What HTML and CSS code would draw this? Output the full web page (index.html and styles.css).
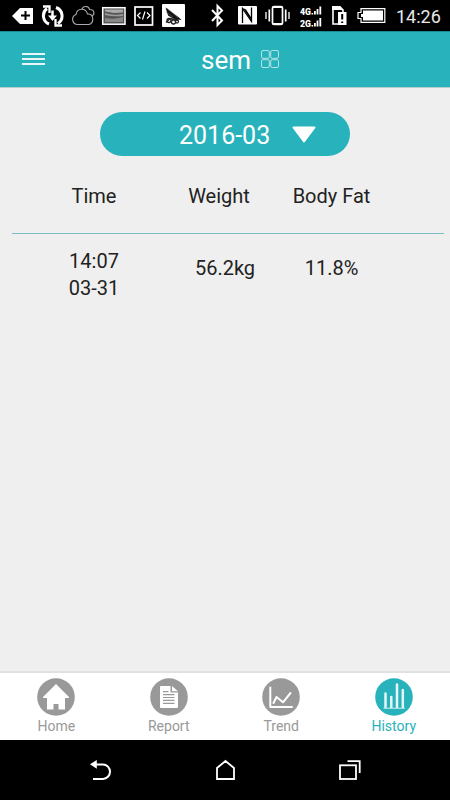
FILE: index.html
```html
<!DOCTYPE html>
<html lang="en">
  <head>
    <meta charset="UTF-8" />
    <meta name="viewport" content="width=device-width, initial-scale=1.0" />
    <title>History</title>
    <link rel="stylesheet" href="styles.css">
  </head>
  <body>
    <div class="status-bar">
      <div class="status-icons">
        <svg width="21" height="31" viewBox="0 0 21 31">
          <path d="M0 16L8 8H21V24H8Z" fill="#fff" />
          <path d="M13.500 11V20M9 15.500H18" stroke="#000" stroke-width="2" />
        </svg>
        <svg width="23" height="31" viewBox="0 0 23 31" fill="none" stroke="#fff" stroke-width="3">
          <path d="M8 24A9 9 0 0 1 6 8.500M15 7.500A9 9 0 0 1 17 23.500" />
          <path d="M2 6.500H8.500V13M21 25.500H14.500V19" stroke-width="2.300" />
          <path d="M11.500 10.500V17" stroke-width="2.500" />
          <path d="M7 15.500H16L11.500 21Z" fill="#fff" stroke="none" />
        </svg>
        <svg width="25" height="31" viewBox="0 0 25 31" fill="none" stroke="#aaa" stroke-width="1.100">
          <path d="M6 24.500A5.200 5.200 0 0 1 5 14.500C6 7.500 15 7.500 16.500 14C23 13.500 23.500 23 18 24.500Z" />
          <path d="M11 9C12 5.500 18 5.500 18.500 9.500C24 9.500 24 15 20.500 16" />
        </svg>
        <svg width="25" height="31" viewBox="0 0 25 31">
          <rect x="1.700" y="7.700" width="22.300" height="16.500" fill="#555" stroke="#fff" stroke-width="1.500" />
          <path d="M4 9.500H22V12.500L13 13L4 11.500Z" fill="#aaa" />
          <path d="M4 13Q12 16 22 14V16Q12 17 4 15Z" fill="#999" />
          <path d="M4 18Q13 20 22 17V22H4Z" fill="#888" />
        </svg>
        <svg width="20" height="31" viewBox="0 0 20 31" fill="none" stroke="#fff">
          <rect x="1" y="7" width="17.500" height="18" stroke-width="1.700" />
          <path d="M6.500 12.500L3.500 15.500L6.500 18.500M13 12.500L16 15.500L13 18.500M11 11.500L8.500 19.500" stroke-width="1.200" />
        </svg>
        <svg width="23" height="31" viewBox="0 0 23 31">
          <rect x="0" y="4" width="23" height="23" rx="1" fill="#fff" />
          <path d="M3.500 7.500L17 17.500L19.500 20L15 19.500L11 18.500L6 15.500Z" fill="#111" />
          <path d="M4 12L11 17M5 8L16 18" stroke="#777" stroke-width=".5" />
          <g fill="none" stroke="#222" stroke-width="1.300">
            <circle cx="7" cy="20.500" r="2" />
            <circle cx="11.500" cy="22" r="2" />
            <circle cx="15" cy="21.500" r="1.500" />
            <path d="M4 22.500L8 18.500L16 20" />
          </g>
        </svg>
      </div>
      <div class="system-icons">
        <svg width="13" height="31" viewBox="0 0 13 31" fill="none" stroke="#fff" stroke-width="2">
          <path d="M1 10L11 20.500L6.500 25V6L11 10.500L1 21" />
        </svg>
        <svg width="19" height="31" viewBox="0 0 19 31">
          <rect x="0" y="6" width="19" height="18.500" rx="1" fill="#fff" />
          <path d="M4.500 23V8.500L13.500 21.500V7.500" fill="none" stroke="#000" stroke-width="1.300" />
          <path d="M5 8L8 9.500L13.500 18V21.500Z" fill="#000" />
        </svg>
        <svg width="25" height="31" viewBox="0 0 25 31" fill="none" stroke="#fff">
          <rect x="7.500" y="6.500" width="10" height="18" rx="1.500" stroke-width="1.700" />
          <path d="M8 7H17M8 24H17" stroke-width="2" />
          <path d="M4.300 9.500V21.500M20.700 9.500V21.500" stroke-width="1.700" />
          <path d="M1 12V19M24 12V19" stroke-width="1.300" />
        </svg>
        <svg class="signal" width="22" height="31" viewBox="0 0 22 31" fill="#fff">
          <text x="0" y="14.500" textLength="11" lengthAdjust="spacingAndGlyphs">4G</text>
          <path d="M11.500 13h1.700v1.500h-1.700zM14 11h1.800v3.500h-1.800zM16.600 9h1.800v5.500h-1.800zM19.400 6.500h1.800v8h-1.800z" />
          <text x="0" y="26.500" textLength="11" lengthAdjust="spacingAndGlyphs">2G</text>
          <path d="M11.500 25h1.700v1.500h-1.700zM14 23h1.800v3.500h-1.800zM16.600 20.500h1.800v6h-1.800zM19.400 18h1.800v8.500h-1.800z" />
        </svg>
        <svg width="15" height="31" viewBox="0 0 15 31">
          <path d="M1 7H8L11 10.500V24H1Z" fill="none" stroke="#fff" stroke-width="1.600" />
          <path d="M0 6H8L12 10H0Z" fill="#fff" />
          <rect x="6" y="12" width="8.500" height="13" fill="#fff" />
          <path d="M10.200 14V19.500M10.200 21.500V23" stroke="#000" stroke-width="2" />
        </svg>
        <svg width="29" height="31" viewBox="0 0 29 31">
          <path d="M4 8.700H27.800V22.300H4V18.500H1V12.500H4Z" fill="none" stroke="#fff" stroke-width="1.200" />
          <path d="M6 10.500H26V20.500H6V17H4V14H6Z" fill="#fff" />
        </svg>
        <span class="clock">14:26</span>
      </div>
    </div>

    <header class="app-header">
      <button class="menu-button" aria-label="Menu">
        <span></span>
        <span></span>
        <span></span>
      </button>
      <h1>sem</h1>
      <svg class="grid-icon" width="18" height="18" viewBox="0 0 18 18" fill="none" stroke="#b5e3e6" stroke-width="1">
        <rect x=".5" y=".5" width="7.800" height="7.800" rx="1.500" />
        <rect x="9.700" y=".5" width="7.800" height="7.800" rx="1.500" />
        <rect x=".5" y="9.700" width="7.800" height="7.800" rx="1.500" />
        <rect x="9.700" y="9.700" width="7.800" height="7.800" rx="1.500" />
      </svg>
    </header>

    <main class="content">
      <button class="month-select">
        <span>2016-03</span>
        <svg width="24" height="17" viewBox="0 0 24 17">
          <path d="M1.500 1.500H22.500L12 15.500Z" fill="#fff" stroke="#fff" stroke-width="2" stroke-linejoin="round" />
        </svg>
      </button>

      <div class="row row-head">
        <div class="time">Time</div>
        <div class="weight">Weight</div>
        <div class="fat">Body Fat</div>
      </div>
      <div class="row row-data">
        <div class="time">14:07<br>03-31</div>
        <div class="weight">56.2kg</div>
        <div class="fat">11.8%</div>
      </div>
    </main>

    <nav class="tab-bar">
      <a class="tab" href="#">
        <svg width="38" height="38" viewBox="0 0 38 38">
          <circle cx="19" cy="19" r="18.800" />
          <path d="M19 6L32 19Q32.500 20 31 20H28V31.500H21.500V26H16.500V31.500H10V20H7Q5.500 20 6 19Z" fill="#fff" />
        </svg>
        <span>Home</span>
      </a>
      <a class="tab" href="#">
        <svg width="38" height="38" viewBox="0 0 38 38">
          <circle cx="19" cy="19" r="18.800" />
          <path d="M11 8H20.500V14.500H28V29Q28 30 27 30H11Q10 30 10 29V9Q10 8 11 8Z" fill="#fff" />
          <path d="M22 8L28 13.300H22Z" fill="#fff" />
          <path d="M13 13.700H18.500M13 16.600H24.500M13 19.500H24.500M13 22.400H24.500M13 25.300H24.500" stroke="#999" stroke-width="1.200" />
        </svg>
        <span>Report</span>
      </a>
      <a class="tab" href="#">
        <svg width="38" height="38" viewBox="0 0 38 38">
          <circle cx="19" cy="19" r="18.800" />
          <g fill="none" stroke="#fff" stroke-linecap="round" stroke-linejoin="round">
            <path d="M8.300 9.500V29H30" stroke-width="2" />
            <path d="M11.500 25L14.500 19L21 24.300L28.500 15" stroke-width="2" />
          </g>
        </svg>
        <span>Trend</span>
      </a>
      <a class="tab active" href="#">
        <svg width="38" height="38" viewBox="0 0 38 38">
          <circle cx="19" cy="19" r="18.800" />
          <path d="M10.500 15.500V29M16.300 19V29M22 6.500V29M27.800 12V29" fill="none" stroke="#e4f6f7" stroke-width="2.500" stroke-linecap="round" />
          <path d="M8.500 30.200H30" stroke="#d4f0f2" stroke-width="1" />
        </svg>
        <span>History</span>
      </a>
    </nav>

    <div class="nav-bar">
      <svg width="22" height="22" viewBox="0 0 22 22">
        <path d="M5 5.500H13A7 7.200 0 0 1 13 19.900H3" fill="none" stroke="#fff" stroke-width="2" />
        <path d="M0 5.300L6.800 1V9.700Z" fill="#fff" />
      </svg>
      <svg width="22" height="22" viewBox="0 0 22 22" fill="none" stroke="#fff" stroke-width="1.800">
        <path d="M2 20V9L10.500 2L19 9V20Z" />
      </svg>
      <svg width="22" height="22" viewBox="0 0 22 22" fill="none" stroke="#fff" stroke-width="1.800">
        <rect x="1" y="6.300" width="16" height="13.700" />
        <path d="M8.500 2.200H20.700V14" />
      </svg>
    </div>
  </body>
</html>
```
FILE: styles.css
```css
* {
  margin: 0;
  padding: 0;
  box-sizing: border-box;
}

body {
  font-family: Roboto, "Liberation Sans", sans-serif;
  background: #efefef;
  width: 450px;
  height: 800px;
  display: flex;
  flex-direction: column;
  overflow: hidden;
}

svg {
  display: block;
  flex-shrink: 0;
}

button {
  border: none;
  font-family: inherit;
  cursor: pointer;
}

/* Status bar */
.status-bar {
  height: 31px;
  background: #000;
  display: flex;
  justify-content: space-between;
  padding: 0 10px 0 12px;
}

.status-icons {
  display: flex;
  gap: 8px;
}

.status-icons svg:nth-child(3) {
  margin-left: -1px;
}

.status-icons svg:nth-child(4) {
  margin-left: -3px;
}

.system-icons {
  display: flex;
  gap: 10px;
}

.system-icons svg:first-child {
  margin-right: 4px;
}

.system-icons svg:nth-child(2) {
  margin-right: -2px;
}

.signal text {
  font-size: 9px;
  font-weight: 900;
}

.clock {
  width: 44px;
  color: #e8e8e8;
  font-size: 18px;
  line-height: 33px;
  white-space: nowrap;
}

/* Header */
.app-header {
  height: 57px;
  padding-bottom: 1px;
  background: #28b2bb;
  border-top: 1px solid #188c94;
  border-bottom: 1px solid #b5cfd1;
  display: flex;
  align-items: center;
}

.menu-button {
  width: 23px;
  margin-left: 22px;
  background: none;
  display: flex;
  flex-direction: column;
  gap: 3px;
}

.menu-button span {
  height: 2px;
  background: #e5f7f8;
}

.app-header h1 {
  margin-left: 156px;
  padding-top: 2px;
  color: #fff;
  font-size: 26px;
  font-weight: 400;
  line-height: 30px;
}

.grid-icon {
  margin-left: 10px;
}

/* History list */
.content {
  flex: 1;
  padding-top: 24px;
}

.month-select {
  width: 250px;
  height: 44px;
  margin: 0 auto;
  padding-left: 79px;
  border-radius: 22px;
  background: #28b2bb;
  color: #fff;
  font-size: 25px;
  display: flex;
  align-items: center;
  gap: 22px;
}

.month-select span {
  padding-top: 3px;
}

.row {
  display: flex;
  margin: 0 6px 0 12px;
  color: #222;
  font-size: 20px;
  line-height: 27px;
  text-align: center;
}

.row-head {
  height: 78px;
  padding-top: 27px;
  border-bottom: 1px solid #7dbec4;
}

.row-data {
  padding-top: 14px;
}

.row-data .weight,
.row-data .fat {
  padding-top: 7px;
}

.time {
  width: 164px;
}

.weight {
  width: 86px;
}

.row-data .weight {
  width: 98px;
}

.fat {
  width: 139px;
}

.row-data .fat {
  width: 115px;
}

/* Bottom tabs */
.tab-bar {
  height: 69px;
  background: #fff;
  border-top: 2px solid #e1e1e1;
  display: flex;
}

.tab {
  flex: 1;
  padding-top: 5px;
  color: #999;
  fill: #999;
  font-size: 14px;
  line-height: 16px;
  text-decoration: none;
  display: flex;
  flex-direction: column;
  align-items: center;
}

.tab span {
  margin-top: 2px;
}

.tab.active {
  color: #28b2bb;
  fill: #28b2bb;
}

/* Android navigation */
.nav-bar {
  height: 60px;
  background: #000;
  display: flex;
  align-items: center;
  justify-content: space-between;
  padding: 0 89px 0 90px;
}
```
